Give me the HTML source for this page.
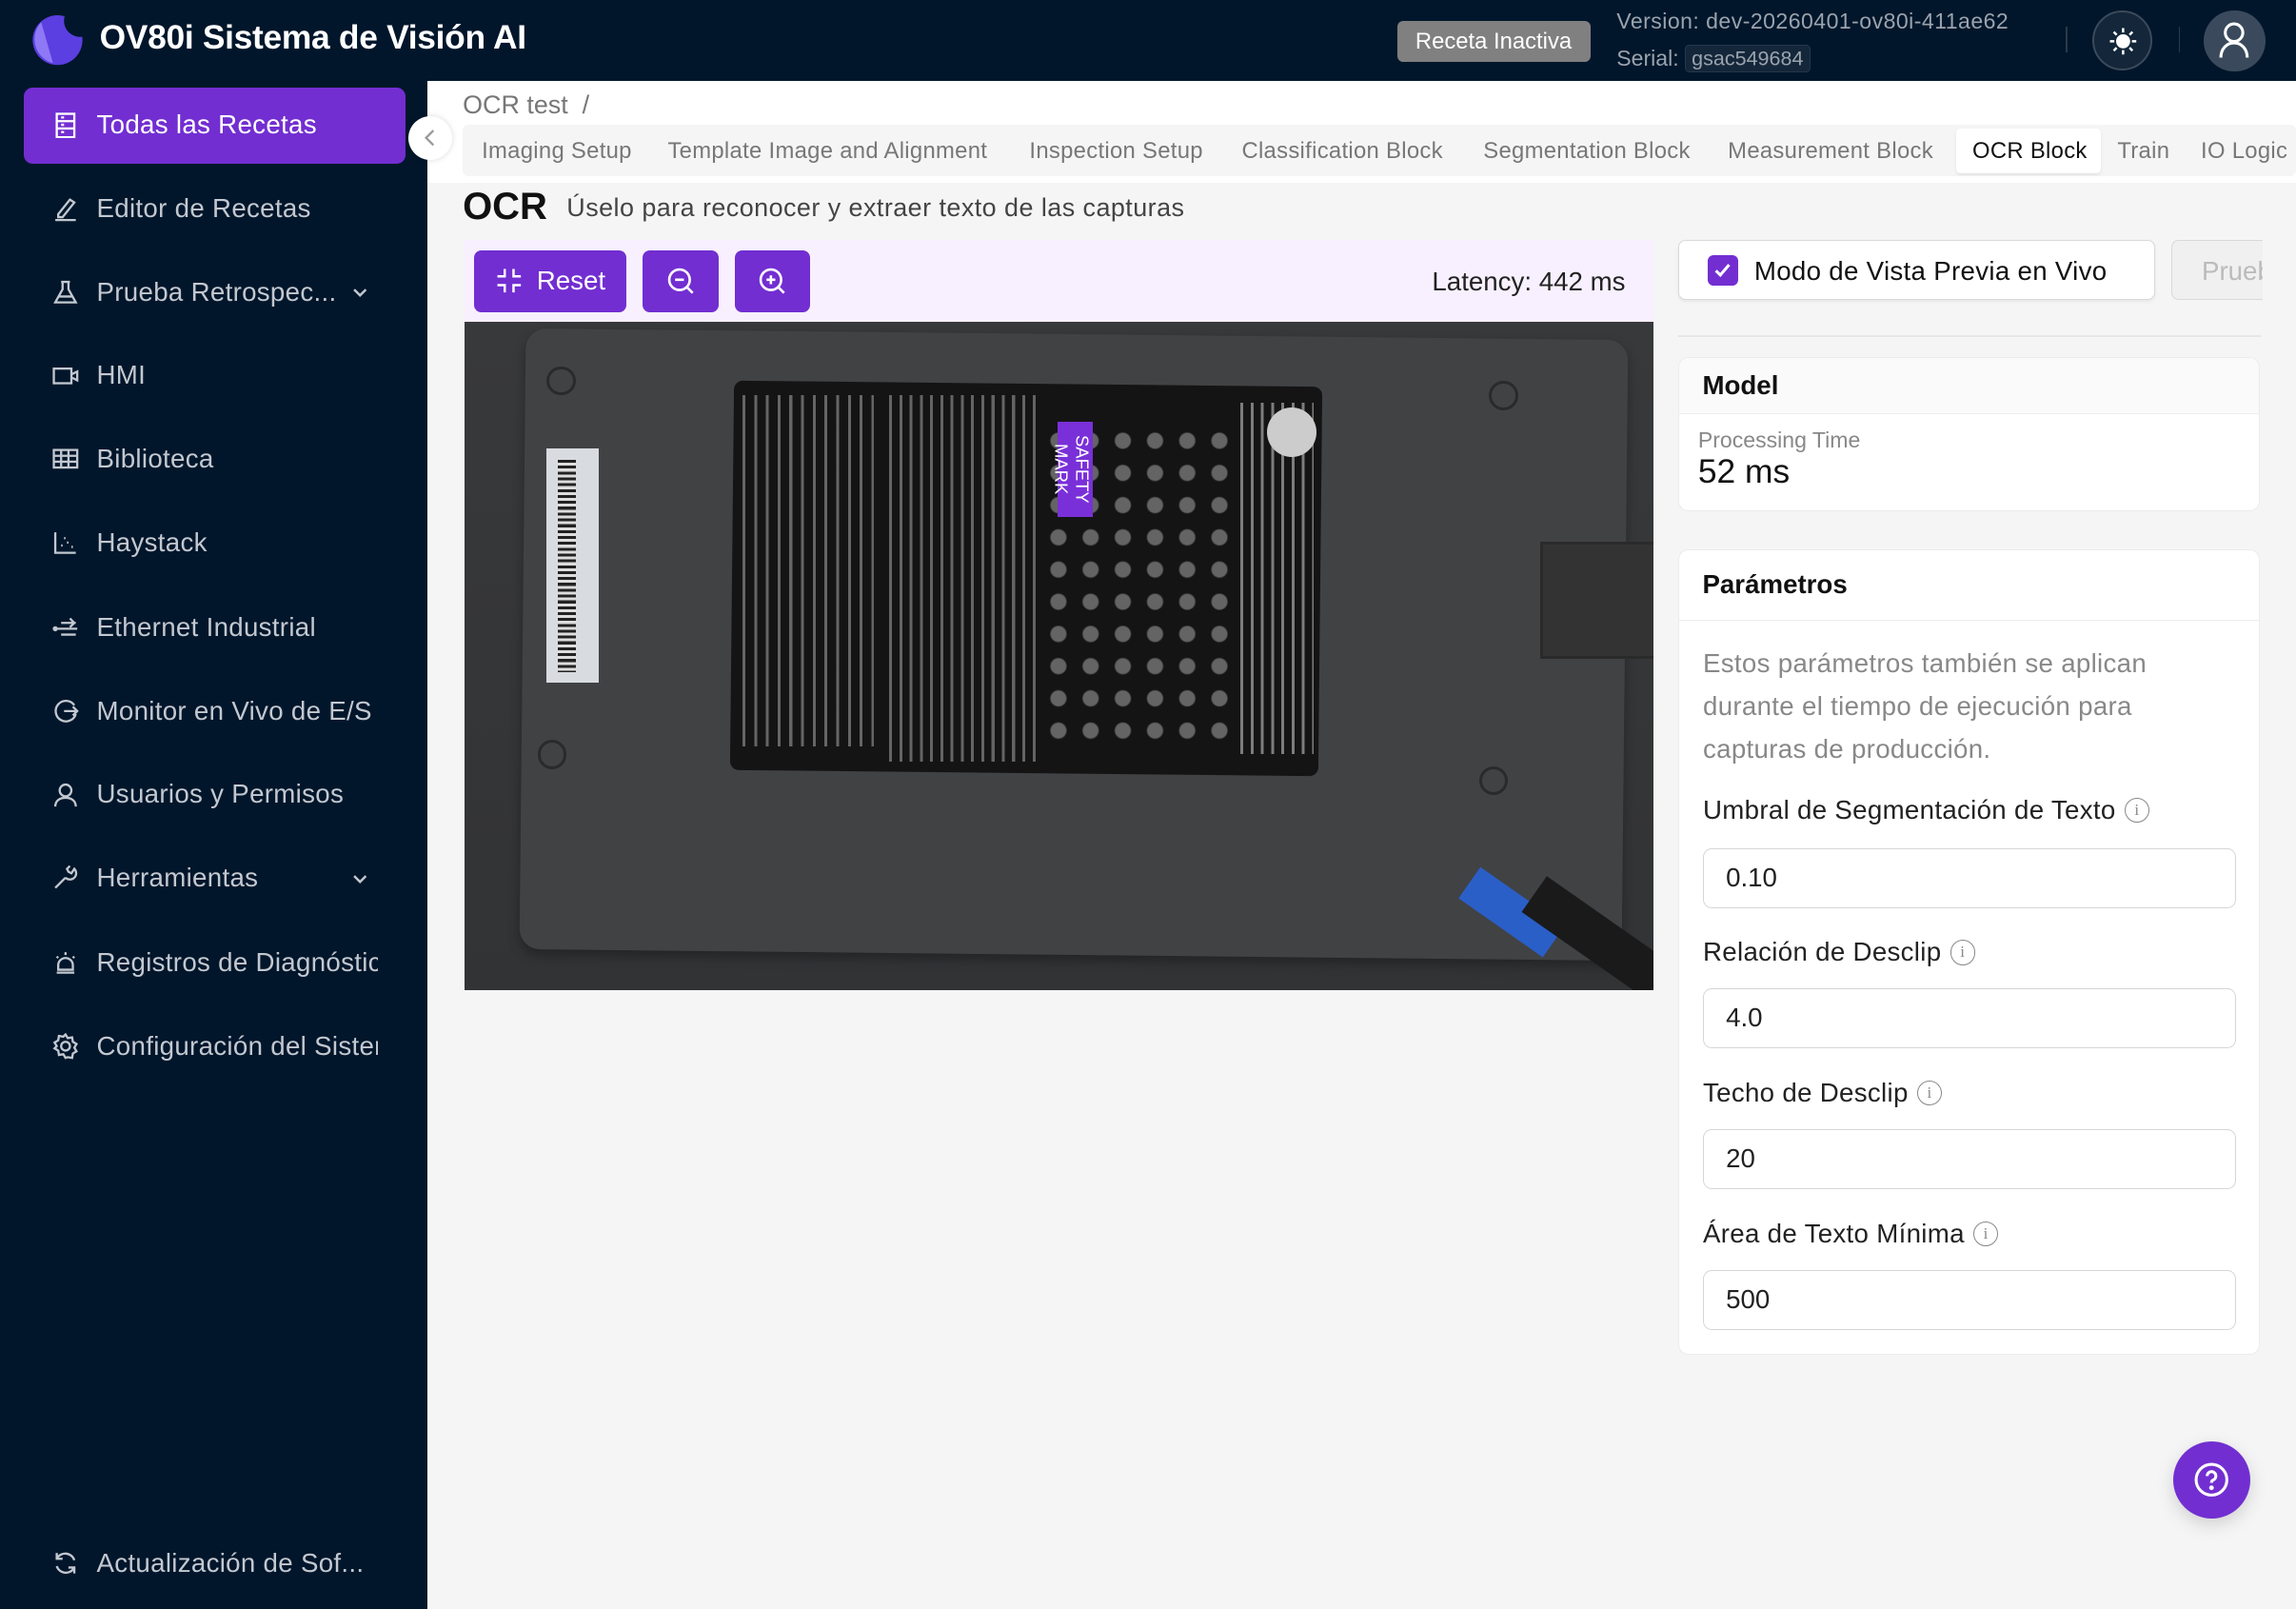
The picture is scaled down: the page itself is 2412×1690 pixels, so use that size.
<!DOCTYPE html>
<html><head><meta charset="utf-8"><style>
*{box-sizing:border-box;margin:0;padding:0}
html,body{width:2412px;height:1690px;overflow:hidden;background:#f5f5f5}
#r{zoom:1.53827;width:1568px;height:1099px;position:relative;font-family:"Liberation Sans",sans-serif;background:#f5f5f5;overflow:hidden}
.a{position:absolute}
.top{left:0;top:0;width:1568px;height:55px;background:#01162b}
.side{left:0;top:55px;width:292px;height:1044px;background:#01162b}
.nav{position:absolute;left:36px;color:#c3c8d0;font-size:18px;display:flex;align-items:center;gap:12px;letter-spacing:.2px}
.nav svg{width:18px;height:18px;stroke:#c3c8d0;fill:none;stroke-width:1.5}
.chev{position:absolute;left:240px;width:12px;height:12px}
.tab{position:absolute;top:94px;font-size:15.5px;color:#777;letter-spacing:.2px}
.inp{position:absolute;left:1163px;width:364px;height:41px;border:1px solid #d6d6d6;border-radius:6px;background:#fff;font-size:18px;color:#222;padding:9px 15px}
.lbl{position:absolute;left:1163px;font-size:18px;color:#222;display:flex;align-items:center;gap:6px}
.ic{width:17px;height:17px;border:1.3px solid #888;border-radius:50%;font-size:11px;color:#888;display:inline-flex;align-items:center;justify-content:center;font-family:"Liberation Serif",serif}
.btn{position:absolute;top:171px;height:42px;background:#722ed1;border-radius:5px;color:#fff;display:flex;align-items:center;justify-content:center;font-size:18px}
</style></head><body><div id="r">
<div class="a top"></div>
<svg class="a" style="left:20px;top:9px" width="38" height="38" viewBox="0 0 38 38"><path d="M24 2 A17 17 0 1 0 36 16 A11 11 0 0 1 24 2Z" fill="#5b3fe0"/><path d="M8 6 L16 34 A17 17 0 0 1 8 6Z" fill="#8f78f5"/></svg>
<div class="a" style="left:68px;top:13px;color:#fff;font-size:23px;font-weight:bold;letter-spacing:-.2px">OV80i Sistema de Visión AI</div>
<div class="a" style="left:954px;top:14px;width:132px;height:28px;background:#808080;border-radius:4px;color:#fff;font-size:15.5px;text-align:center;line-height:28px">Receta Inactiva</div>
<div class="a" style="left:1104px;top:6px;color:#9aa3ad;font-size:15px;letter-spacing:.3px">Version: dev-20260401-ov80i-411ae62</div>
<div class="a" style="left:1104px;top:31px;color:#9aa3ad;font-size:15px">Serial: <span style="background:#14263a;border:1px solid #243649;border-radius:3px;padding:1px 4px;font-size:14px">gsac549684</span></div>
<div class="a" style="left:1411px;top:18px;width:1px;height:18px;background:#2a3a4a"></div>
<div class="a" style="left:1429px;top:7px;width:41px;height:41px;border-radius:50%;background:#13263a;border:1.5px solid #3a4a5a"></div>
<svg class="a" style="left:1440px;top:18px" width="20" height="20" viewBox="0 0 20 20" stroke="#fff" stroke-width="1.6"><circle cx="10" cy="10" r="4" fill="#fff"/><path d="M10 1v3M10 16v3M1 10h3M16 10h3M3.6 3.6l2 2M14.4 14.4l2 2M3.6 16.4l2-2M14.4 5.6l2-2"/></svg>
<div class="a" style="left:1488px;top:18px;width:1px;height:18px;background:#2a3a4a"></div>
<div class="a" style="left:1505px;top:7px;width:42px;height:42px;border-radius:50%;background:#3a4a5c"></div>
<svg class="a" style="left:1515px;top:14px" width="22" height="26" viewBox="0 0 22 26" fill="none" stroke="#fff" stroke-width="2"><circle cx="11" cy="8" r="6"/><path d="M2 25c0-6 4-10 9-10s9 4 9 10"/></svg>

<div class="a side"></div>
<div class="a" style="left:16px;top:60px;width:261px;height:52px;background:#722ed1;border-radius:6px"></div>
<div class="nav" style="top:75px;color:#fff"><svg viewBox="0 0 18 18" style="stroke:#fff"><rect x="3" y="1" width="12" height="16"/><path d="M3 6h12M3 11h12M6 3.5h2M6 8.5h2M6 13.5h2"/></svg>Todas las Recetas</div>
<div class="nav" style="top:132px"><svg viewBox="0 0 18 18"><path d="M4 13l8-10 3 2-8 10-3 0z M2 17h14"/></svg>Editor de Recetas</div>
<div class="nav" style="top:189px"><svg viewBox="0 0 18 18"><path d="M6 2h6M7 2v5l-5 9h14l-5-9V2M4 12h10"/></svg>Prueba Retrospec...</div>
<svg class="chev" style="top:194px" viewBox="0 0 12 12" fill="none" stroke="#c3c8d0" stroke-width="1.6"><path d="M2 4l4 4 4-4"/></svg>
<div class="nav" style="top:246px"><svg viewBox="0 0 18 18"><rect x="1" y="4" width="12" height="10"/><path d="M13 8l4-2v6l-4-2"/></svg>HMI</div>
<div class="nav" style="top:303px"><svg viewBox="0 0 18 18"><rect x="1" y="3" width="16" height="12"/><path d="M1 7h16M1 11h16M6 3v12M11 3v12"/></svg>Biblioteca</div>
<div class="nav" style="top:360px"><svg viewBox="0 0 18 18"><path d="M2 2v14h14M6 11h1M10 9h1M13 12h1M8 6h1"/></svg>Haystack</div>
<div class="nav" style="top:418px"><svg viewBox="0 0 18 18"><path d="M2 10h15M6 6h10M12 3l3 3-3 3M6 14h10"/><circle cx="2" cy="10" r="1" fill="#c3c8d0"/></svg>Ethernet Industrial</div>
<div class="nav" style="top:475px"><svg viewBox="0 0 18 18"><path d="M15 5A7 7 0 1 0 16 11M8 9h9M14 6l3 3-3 3"/></svg>Monitor en Vivo de E/S</div>
<div class="nav" style="top:532px"><svg viewBox="0 0 18 18"><circle cx="9" cy="6" r="4"/><path d="M2 17c0-4 3-6 7-6s7 2 7 6"/></svg>Usuarios y Permisos</div>
<div class="nav" style="top:589px"><svg viewBox="0 0 18 18"><path d="M2 16l7-7M9 9a4 4 0 1 0 6-6l-2 3-2-1-1-2 2-2"/></svg>Herramientas</div>
<svg class="chev" style="top:594px" viewBox="0 0 12 12" fill="none" stroke="#c3c8d0" stroke-width="1.6"><path d="M2 4l4 4 4-4"/></svg>
<div class="nav" style="top:647px;width:222px;overflow:hidden;white-space:nowrap"><svg viewBox="0 0 18 18" style="flex:none"><path d="M3 16h12M4 14V11a5 5 0 0 1 10 0v3zM9 2v2M3 5l1 1M15 5l-1 1"/></svg>Registros de Diagnóstico</div>
<div class="nav" style="top:704px;width:222px;overflow:hidden;white-space:nowrap"><svg viewBox="0 0 18 18" style="flex:none"><circle cx="9" cy="9" r="3"/><path d="M9 1l1.5 2.5 3-.5.5 3 2.5 1.5-1.5 2.5 1.5 2.5-2.5 1.5-.5 3-3-.5L9 17l-1.5-2.5-3 .5-.5-3L1.5 10.5 3 9 1.5 6.5 4 5l.5-3 3 .5z"/></svg>Configuración del Sistema</div>
<div class="nav" style="top:1057px"><svg viewBox="0 0 18 18"><path d="M15 7A6.5 6.5 0 0 0 3 6M3 11a6.5 6.5 0 0 0 12 1M3 2v4h4M15 16v-4h-4"/></svg>Actualización de Sof...</div>

<div class="a" style="left:292px;top:55px;width:1276px;height:70px;background:#fff"></div>
<div class="a" style="left:279px;top:79px;width:30px;height:30px;border-radius:50%;background:#fff;box-shadow:0 0 4px rgba(0,0,0,.15)"></div>
<svg class="a" style="left:288px;top:87px" width="12" height="14" viewBox="0 0 12 14" fill="none" stroke="#999" stroke-width="1.5"><path d="M8 2L3 7l5 5"/></svg>
<div class="a" style="left:316px;top:62px;font-size:17.5px;color:#777">OCR test &nbsp;/</div>
<div class="a" style="left:316px;top:85px;width:1252px;height:35px;background:#f5f5f5;border-radius:4px"></div>
<div class="tab" style="left:329px">Imaging Setup</div>
<div class="tab" style="left:456px">Template Image and Alignment</div>
<div class="tab" style="left:703px">Inspection Setup</div>
<div class="tab" style="left:848px">Classification Block</div>
<div class="tab" style="left:1013px">Segmentation Block</div>
<div class="tab" style="left:1180px">Measurement Block</div>
<div class="a" style="left:1336px;top:88px;width:99px;height:30px;background:#fff;border-radius:3px;box-shadow:0 1px 2px rgba(0,0,0,.08)"></div>
<div class="tab" style="left:1347px;color:#111">OCR Block</div>
<div class="tab" style="left:1446px">Train</div>
<div class="tab" style="left:1503px">IO Logic</div>

<div class="a" style="left:316px;top:127px;font-size:26px;font-weight:bold;color:#111">OCR</div>
<div class="a" style="left:387px;top:132px;font-size:17.5px;color:#444;letter-spacing:.3px">Úselo para reconocer y extraer texto de las capturas</div>

<div class="a" style="left:317px;top:164px;width:812px;height:56px;background:#f8f0ff"></div>
<div class="btn" style="left:324px;width:104px;gap:10px"><svg width="18" height="18" viewBox="0 0 18 18" fill="none" stroke="#fff" stroke-width="1.6"><path d="M6 1v5H1M12 1v5h5M6 17v-5H1M12 17v-5h5"/></svg>Reset</div>
<div class="btn" style="left:439px;width:52px"><svg width="20" height="20" viewBox="0 0 20 20" fill="none" stroke="#fff" stroke-width="1.7"><circle cx="9" cy="9" r="7"/><path d="M6 9h6M14 14l4 4"/></svg></div>
<div class="btn" style="left:502px;width:51px"><svg width="20" height="20" viewBox="0 0 20 20" fill="none" stroke="#fff" stroke-width="1.7"><circle cx="9" cy="9" r="7"/><path d="M6 9h6M9 6v6M14 14l4 4"/></svg></div>
<div class="a" style="left:978px;top:182px;font-size:18px;color:#222">Latency: 442 ms</div>

<div class="a" style="left:317px;top:220px;width:812px;height:456px;background:linear-gradient(180deg,#38393b,#323335);overflow:hidden">
 <div class="a" style="left:40px;top:8px;width:753px;height:424px;background:#414244;border-radius:14px;transform:rotate(.6deg);box-shadow:0 4px 8px rgba(0,0,0,.3)"></div>
 <div class="a" style="left:56px;top:30px;width:20px;height:20px;border:2px solid #2a2a2c;border-radius:50%"></div>
 <div class="a" style="left:700px;top:40px;width:20px;height:20px;border:2px solid #2a2a2c;border-radius:50%"></div>
 <div class="a" style="left:50px;top:285px;width:20px;height:20px;border:2px solid #2a2a2c;border-radius:50%"></div>
 <div class="a" style="left:693px;top:303px;width:20px;height:20px;border:2px solid #2a2a2c;border-radius:50%"></div>
 <div class="a" style="left:56px;top:86px;width:36px;height:160px;background:#d8dbe0"></div>
 <div class="a" style="left:64px;top:94px;width:12px;height:145px;background:repeating-linear-gradient(180deg,#222 0 2px,#ddd 2px 4px)"></div>
 <div class="a" style="left:183px;top:42px;width:402px;height:266px;background:#141415;border-radius:6px;transform:rotate(.6deg)"></div>
 <div class="a" style="left:190px;top:50px;width:90px;height:240px;background:repeating-linear-gradient(90deg,#888 0 2px,transparent 2px 8px);opacity:.7"></div>
 <div class="a" style="left:290px;top:50px;width:100px;height:250px;background:repeating-linear-gradient(90deg,#999 0 2px,transparent 2px 7px);opacity:.6"></div>
 <div class="a" style="left:395px;top:70px;width:130px;height:225px;background:radial-gradient(circle,#999 0 5px,transparent 6px) 0 0/22px 22px;opacity:.6"></div>
 <div class="a" style="left:530px;top:55px;width:50px;height:240px;background:repeating-linear-gradient(90deg,#aaa 0 2px,transparent 2px 7px);opacity:.7"></div>
 <div class="a" style="left:548px;top:58px;width:34px;height:34px;border-radius:50%;background:#ccc"></div>
 <div class="a" style="left:405px;top:68px;width:24px;height:65px;background:#7a30d8;color:#fff;font-size:12px;writing-mode:vertical-rl;text-align:center">SAFETY MARK</div>
 <div class="a" style="left:735px;top:150px;width:80px;height:80px;background:#333;border:2px solid #2a2a2a"></div>
 <div class="a" style="left:680px;top:390px;width:70px;height:26px;background:#2a5fc8;transform:rotate(35deg)"></div>
 <div class="a" style="left:720px;top:410px;width:120px;height:30px;background:#1a1a1b;transform:rotate(35deg)"></div>
</div>

<div class="a" style="left:1146px;top:164px;width:326px;height:41px;background:#fff;border:1px solid #d9d9d9;border-radius:5px;box-shadow:0 1px 2px rgba(0,0,0,.06)"></div>
<div class="a" style="left:1166px;top:174px;width:21px;height:21px;background:#722ed1;border-radius:4px"></div>
<svg class="a" style="left:1169px;top:177px" width="15" height="15" viewBox="0 0 15 15" fill="none" stroke="#fff" stroke-width="2"><path d="M3 8l3 3 6-7"/></svg>
<div class="a" style="left:1198px;top:175px;font-size:18px;color:#111;letter-spacing:.2px">Modo de Vista Previa en Vivo</div>
<div class="a" style="left:1483px;top:164px;width:62px;height:41px;background:#f0f0f0;border:1px solid #d9d9d9;border-right:none;border-radius:5px 0 0 5px;overflow:hidden;color:#bbb;font-size:18px;padding:10px 0 0 20px">Prueba</div>
<div class="a" style="left:1146px;top:229px;width:398px;height:1px;background:#e6e6e6"></div>

<div class="a" style="left:1146px;top:244px;width:397px;height:105px;background:#fff;border:1px solid #ececec;border-radius:7px;overflow:hidden">
 <div style="height:38px;background:#fafafa;border-bottom:1px solid #eee;padding:8px 16px;font-size:18px;font-weight:bold;color:#111">Model</div>
 <div style="padding:9px 13px 0;font-size:15px;color:#888">Processing Time</div>
 <div style="padding:0 13px;font-size:23px;color:#111">52 ms</div>
</div>

<div class="a" style="left:1146px;top:375px;width:397px;height:550px;background:#fff;border:1px solid #ececec;border-radius:7px">
 <div style="height:48px;border-bottom:1px solid #eee;padding:13px 16px;font-size:18px;font-weight:bold;color:#111">Parámetros</div>
</div>
<div class="a" style="left:1163px;top:439px;width:350px;font-size:18px;line-height:29px;color:#888;letter-spacing:.2px">Estos parámetros también se aplican durante el tiempo de ejecución para capturas de producción.</div>
<div class="lbl" style="top:543px;letter-spacing:.2px">Umbral de Segmentación de Texto <span class="ic">i</span></div>
<div class="inp" style="top:579px">0.10</div>
<div class="lbl" style="top:640px;letter-spacing:.2px">Relación de Desclip <span class="ic">i</span></div>
<div class="inp" style="top:675px">4.0</div>
<div class="lbl" style="top:736px;letter-spacing:.2px">Techo de Desclip <span class="ic">i</span></div>
<div class="inp" style="top:771px">20</div>
<div class="lbl" style="top:832px;letter-spacing:.2px">Área de Texto Mínima <span class="ic">i</span></div>
<div class="inp" style="top:867px">500</div>

<div class="a" style="left:1484px;top:984px;width:53px;height:53px;border-radius:50%;background:#722ed1;box-shadow:0 4px 12px rgba(0,0,0,.15)"></div>
<svg class="a" style="left:1498px;top:998px" width="25" height="25" viewBox="0 0 25 25" fill="none" stroke="#fff" stroke-width="2"><circle cx="12.5" cy="12.5" r="10.5"/><path d="M9.5 10a3 3 0 1 1 4 2.8c-.8.4-1 1-1 1.8"/><circle cx="12.5" cy="18" r=".6" fill="#fff"/></svg>
</div></body></html>
